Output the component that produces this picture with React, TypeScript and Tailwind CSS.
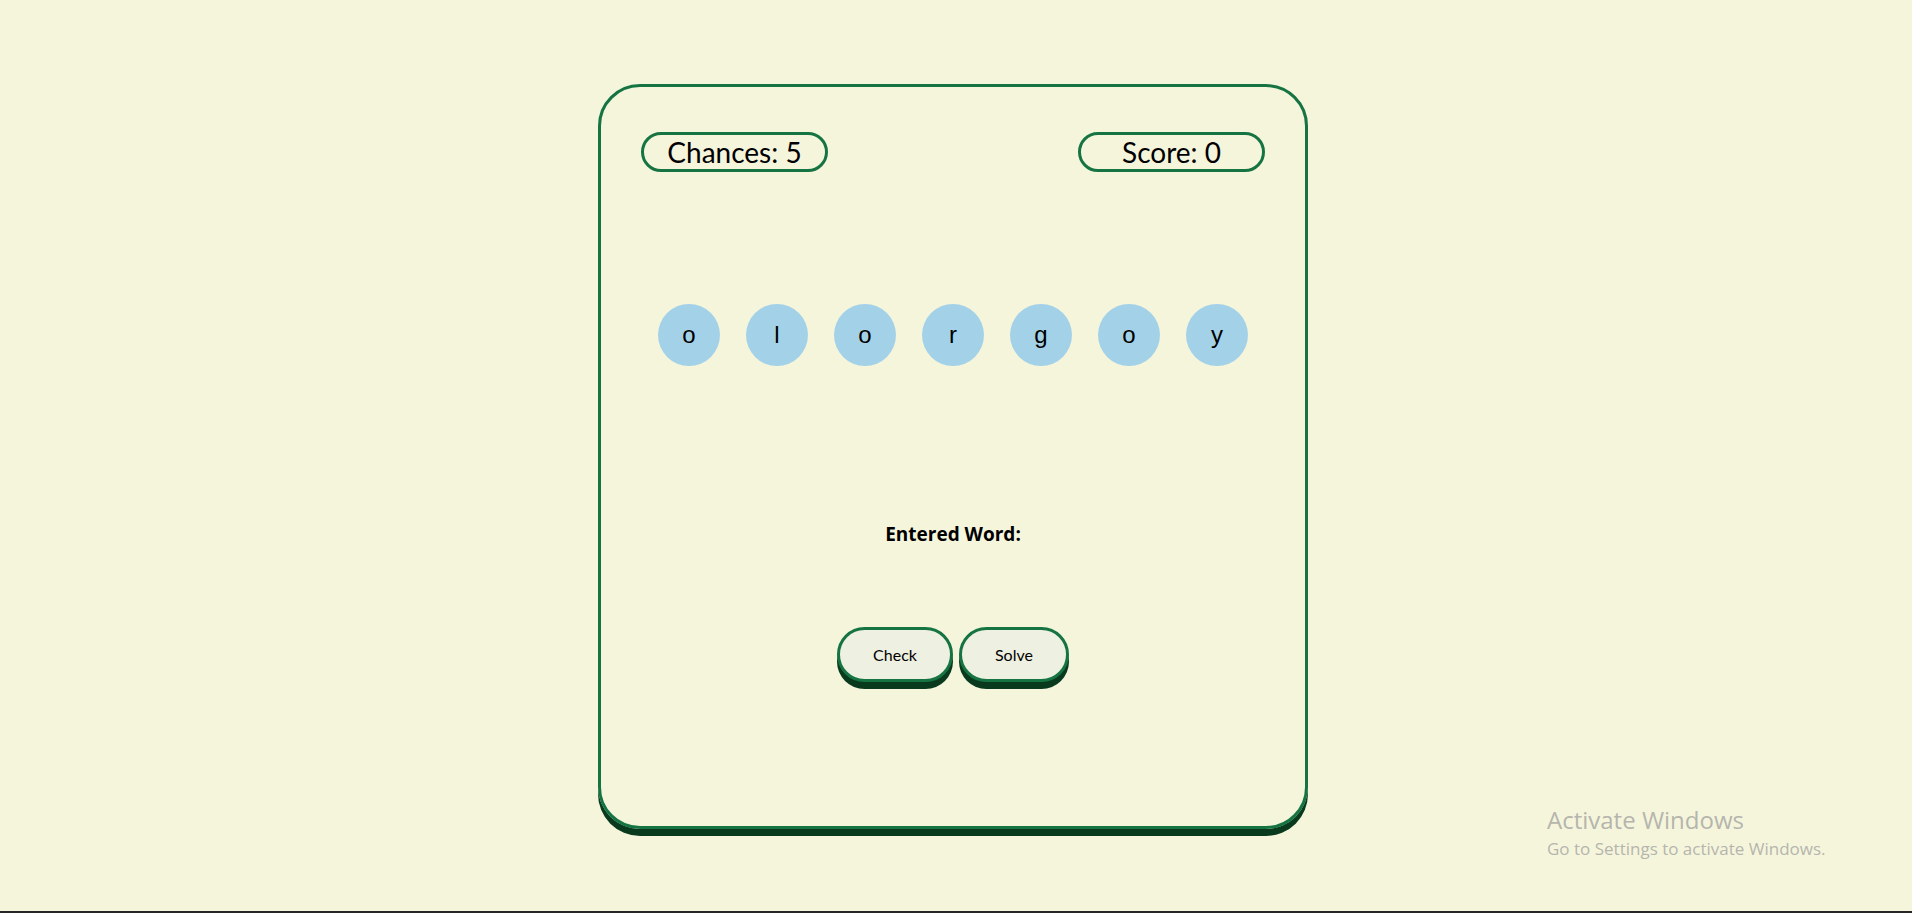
const letters = ["o", "l", "o", "r", "g", "o", "y"];

const gill = { fontFamily: "Lato, 'Open Sans', sans-serif" };

export default function App() {
  return (
    <div className="relative h-[913px] overflow-hidden bg-[#f5f5dc] border-b-2 border-[#262626]">
      <div className="flex justify-center pr-[6px] pt-[84px]">
        {/* game card */}
        <div className="w-[710px] h-[745px] rounded-[42px] border-[3px] border-[#167443] shadow-[0_7px_0_#0a3a1e] flex flex-col items-center">
          <div className="w-full flex justify-between pt-[45px] px-[40px]" style={gill}>
            <div className="w-[187px] h-[40px] rounded-full border-[3px] border-[#167443] flex items-center justify-center text-[28px] text-black">
              Chances: 5
            </div>
            <div className="w-[187px] h-[40px] rounded-full border-[3px] border-[#167443] flex items-center justify-center text-[28px] text-black">
              Score: 0
            </div>
          </div>

          <div className="mt-[132px] flex gap-[26px] font-['Liberation_Sans',Arial,sans-serif]">
            {letters.map((l, i) => (
              <div
                key={i}
                className="w-[62px] h-[62px] rounded-full bg-[#a3d2e8] flex items-center justify-center text-[24px] text-black"
              >
                {l}
              </div>
            ))}
          </div>

          <div className="mt-[155px] h-[26px] flex items-center text-[19px] font-bold text-black font-['Open_Sans',sans-serif]">
            Entered Word:
          </div>

          <div className="mt-[80px] flex gap-[6px]" style={gill}>
            <button className="h-[55px] px-[33px] rounded-full border-[3px] border-[#167443] bg-[#eef0e1] shadow-[0_7px_0_#0a3a1e] text-[16px] text-black">
              Check
            </button>
            <button className="h-[55px] px-[33px] rounded-full border-[3px] border-[#167443] bg-[#eef0e1] shadow-[0_7px_0_#0a3a1e] text-[16px] text-black">
              Solve
            </button>
          </div>
        </div>
      </div>

      {/* windows watermark */}
      <div className="absolute left-[1547px] top-[804px] text-[#b5b5ad] font-['Open_Sans',sans-serif] pointer-events-none">
        <div className="text-[24px] leading-[32px]">Activate Windows</div>
        <div className="text-[17px] leading-[26px]">Go to Settings to activate Windows.</div>
      </div>
    </div>
  );
}
